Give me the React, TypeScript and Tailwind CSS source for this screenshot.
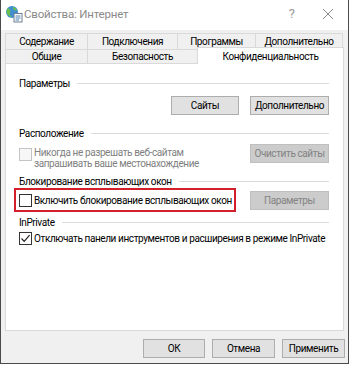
import React from "react";

function Btn({
  children,
  w,
  disabled,
}: {
  children: React.ReactNode;
  w: string;
  disabled?: boolean;
}) {
  return (
    <div
      className={
        "h-[19px] flex items-center justify-center border whitespace-nowrap " +
        w +
        (disabled
          ? " bg-[#cccccc] border-[#bfbfbf] text-[#838383]"
          : " bg-[#e1e1e1] border-[#adadad] text-black")
      }
    >
      {children}
    </div>
  );
}

function Header({ children }: { children: React.ReactNode }) {
  return (
    <div className="h-[14px] flex items-center gap-[7px]">
      <span className="whitespace-nowrap">{children}</span>
      <div className="flex-1 h-px bg-[#dcdcdc]" />
    </div>
  );
}

function Check({ checked, disabled }: { checked?: boolean; disabled?: boolean }) {
  return (
    <div
      className={
        "w-[13px] h-[13px] shrink-0 border flex items-center justify-center " +
        (disabled ? "border-[#c4c4c4] bg-[#f7f7f7]" : "border-[#333333] bg-white")
      }
    >
      {checked && (
        <svg width="11" height="11" viewBox="0 0 11 11">
          <path d="M1.5 5.5 L4.2 8.3 L9.6 2.2" fill="none" stroke="#222" strokeWidth="1.2" />
        </svg>
      )}
    </div>
  );
}

function Tab({
  children,
  w,
  last,
  h,
}: {
  children: React.ReactNode;
  w: string;
  last?: boolean;
  h: string;
}) {
  return (
    <div
      className={
        "flex items-center justify-center border-t border-l border-[#d9d9d9] bg-[#f0f0f0] whitespace-nowrap " +
        w +
        " " +
        h +
        (last ? " border-r" : "")
      }
    >
      {children}
    </div>
  );
}

export default function App() {
  return (
    <div className="w-[350px] h-[366px] bg-white [font-family:Roboto,sans-serif] text-[10px] tracking-[-0.4px] leading-[11px] text-black">
      <div className="w-[349px] h-[364px] bg-[#f0f0f0] border-l border-r border-b border-[#4a4a4a] flex flex-col">
        {/* title bar */}
        <div className="h-[30px] bg-white flex items-center pl-[4px] pr-[14px]">
          <svg width="18" height="18" viewBox="0 0 18 18" className="shrink-0 -mt-[3px]">
            <circle cx="7" cy="7" r="6" fill="#3f8fd0" />
            <path d="M3 3 C5 4 6 6 5 8 C4 10 6 11 7 12 C5 12 2 10 1.5 7 C1.5 5 2 4 3 3 Z" fill="#6cc04a" />
            <path d="M8 1.5 C9 3 11 3 12 5 C11 6 9 5 8 4 Z" fill="#6cc04a" />
            <rect x="9" y="8.5" width="8" height="8.5" fill="#ffffff" stroke="#6d7f92" strokeWidth="1" />
            <line x1="10.5" y1="11" x2="15.5" y2="11" stroke="#4a7fb5" strokeWidth="1" />
            <line x1="10.5" y1="13" x2="15.5" y2="13" stroke="#4a7fb5" strokeWidth="1" />
            <line x1="10.5" y1="15" x2="14" y2="15" stroke="#4a7fb5" strokeWidth="1" />
          </svg>
          <span className="ml-[1px] text-[11.5px] leading-[14px] tracking-[-0.2px] text-[#8a8a8a] -mt-[2px]">
            Свойства: Интернет
          </span>
          <div className="flex-1" />
          <span className="text-[13px] leading-[14px] tracking-normal text-[#9a9a9a] -mt-[3px]">?</span>
          <svg width="12" height="12" viewBox="0 0 12 12" className="ml-[27px] -mt-[3px]">
            <path d="M1 1 L11 11 M11 1 L1 11" stroke="#8a8a8a" strokeWidth="1" />
          </svg>
        </div>

        {/* tabs */}
        <div className="mt-[3px] ml-[4px] flex">
          <Tab w="w-[82px]" h="h-[16px]">Содержание</Tab>
          <Tab w="w-[90px]" h="h-[16px]">Подключения</Tab>
          <Tab w="w-[78px]" h="h-[16px]">Программы</Tab>
          <Tab w="w-[88px]" h="h-[16px]" last>
            Дополнительно
          </Tab>
        </div>
        <div className="ml-[4px] -mt-[2px] flex items-end h-[16px] relative z-10">
          <Tab w="w-[82px]" h="h-[14px]">Общие</Tab>
          <Tab w="w-[110px]" h="h-[14px]">Безопасность</Tab>
          <div className="w-[147px] h-[17px] -mb-px bg-white border-t border-l border-r border-[#d9d9d9] flex justify-center pt-[3px]">
            Конфиденциальность
          </div>
        </div>

        {/* panel */}
        <div className="ml-[4px] w-[339px] h-[268px] bg-white border border-[#d9d9d9] pl-[13px] pr-[14px] pt-[12px] flex flex-col">
          <Header>Параметры</Header>
          <div className="mt-[6px] flex justify-end gap-[11px]">
            <Btn w="w-[68px]">Сайты</Btn>
            <Btn w="w-[79px]">Дополнительно</Btn>
          </div>

          <div className="mt-[11px]">
            <Header>Расположение</Header>
          </div>
          <div className="mt-[4px] flex justify-between items-start">
            <div className="flex items-start pt-[4px]">
              <Check disabled />
              <div className="ml-[2px] -mt-[1px] text-[#7f7f7f]">
                <div>Никогда не разрешать веб-сайтам</div>
                <div>запрашивать ваше местонахождение</div>
              </div>
            </div>
            <Btn w="w-[79px]" disabled>
              Очистить сайты
            </Btn>
          </div>

          <div className="mt-[5px]">
            <Header>Блокирование всплывающих окон</Header>
          </div>
          <div className="flex justify-between items-center">
            <div className="-ml-[5px] w-[222px] h-[24px] border-2 border-[#d21f2a] flex items-center pl-[3px]">
              <Check />
              <span className="ml-[2px] whitespace-nowrap">Включить блокирование всплывающих окон</span>
            </div>
            <Btn w="w-[79px]" disabled>
              Параметры
            </Btn>
          </div>

          <div className="mt-[3px]">
            <Header>InPrivate</Header>
          </div>
          <div className="mt-[3px] flex items-center">
            <Check checked />
            <span className="ml-[2px] whitespace-nowrap">
              Отключать панели инструментов и расширения в режиме InPrivate
            </span>
          </div>
        </div>

        {/* bottom buttons */}
        <div className="mt-[8px] flex justify-end gap-[7px] pr-[3px]">
          <Btn w="w-[62px]">ОК</Btn>
          <Btn w="w-[63px]">Отмена</Btn>
          <Btn w="w-[63px]">Применить</Btn>
        </div>
      </div>
    </div>
  );
}
